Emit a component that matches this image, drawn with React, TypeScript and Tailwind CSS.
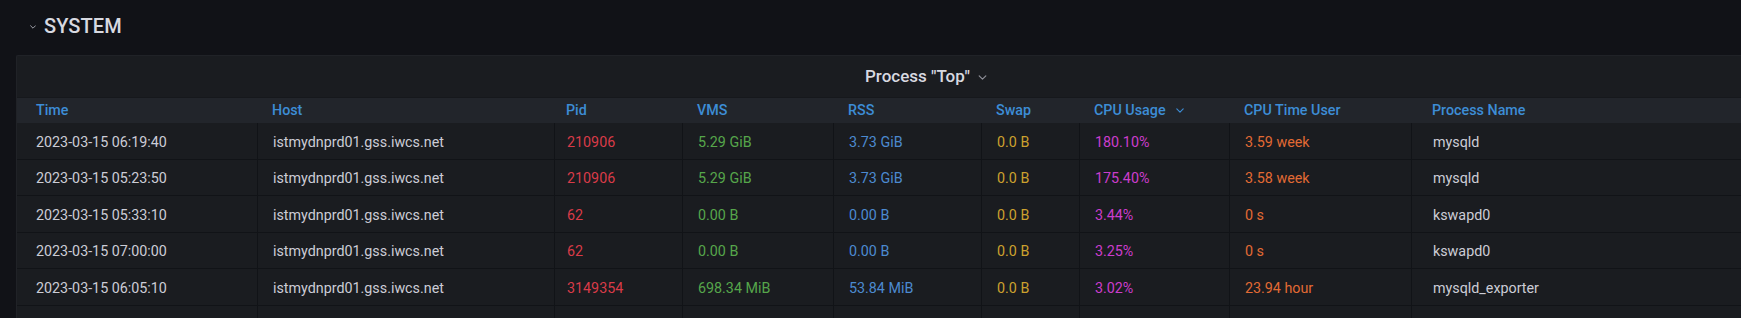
import React from 'react';

type Row = {
  time: string;
  host: string;
  pid: string;
  vms: string;
  rss: string;
  swap: string;
  cpu: string;
  cpuTime: string;
  name: string;
};

const rows: Row[] = [
  { time: '2023-03-15 06:19:40', host: 'istmydnprd01.gss.iwcs.net', pid: '210906', vms: '5.29 GiB', rss: '3.73 GiB', swap: '0.0 B', cpu: '180.10%', cpuTime: '3.59 week', name: 'mysqld' },
  { time: '2023-03-15 05:23:50', host: 'istmydnprd01.gss.iwcs.net', pid: '210906', vms: '5.29 GiB', rss: '3.73 GiB', swap: '0.0 B', cpu: '175.40%', cpuTime: '3.58 week', name: 'mysqld' },
  { time: '2023-03-15 05:33:10', host: 'istmydnprd01.gss.iwcs.net', pid: '62', vms: '0.00 B', rss: '0.00 B', swap: '0.0 B', cpu: '3.44%', cpuTime: '0 s', name: 'kswapd0' },
  { time: '2023-03-15 07:00:00', host: 'istmydnprd01.gss.iwcs.net', pid: '62', vms: '0.00 B', rss: '0.00 B', swap: '0.0 B', cpu: '3.25%', cpuTime: '0 s', name: 'kswapd0' },
  { time: '2023-03-15 06:05:10', host: 'istmydnprd01.gss.iwcs.net', pid: '3149354', vms: '698.34 MiB', rss: '53.84 MiB', swap: '0.0 B', cpu: '3.02%', cpuTime: '23.94 hour', name: 'mysqld_exporter' },
  { time: '2023-03-15 06:45:20', host: 'istmydnprd01.gss.iwcs.net', pid: '3149354', vms: '698.34 MiB', rss: '53.84 MiB', swap: '0.0 B', cpu: '2.98%', cpuTime: '23.61 hour', name: 'mysqld_exporter' },
];

const grid =
  'grid grid-cols-[240px_297px_128px_151px_148px_98px_150px_182px_1fr]';

function Chevron({ className }: { className: string }) {
  return (
    <svg viewBox="0 0 10 6" className={className} fill="none">
      <path d="M1 1l4 4 4-4" stroke="currentColor" strokeWidth="1.4" strokeLinecap="round" strokeLinejoin="round" />
    </svg>
  );
}

const headers = ['Time', 'Host', 'Pid', 'VMS', 'RSS', 'Swap', 'CPU Usage', 'CPU Time User', 'Process Name'];

const headPad = ['pl-[19px]', 'pl-[15px]', 'pl-[12px]', 'pl-[15px]', 'pl-[15px]', 'pl-[15px]', 'pl-[15px]', 'pl-[15px]', 'pl-[21px]'];

export default function App() {
  return (
    <div className="w-[1741px] h-[318px] overflow-hidden bg-[#111217] font-[Roboto,sans-serif]">
      {/* row title */}
      <div className="h-[52px] flex items-center pl-[30px] gap-[8px] text-[#d8d9e0]">
        <Chevron className="w-[6px] h-[4px] mt-[2px] text-[#b9bac2]" />
        <span className="text-[20px] font-medium tracking-[0.1px]">SYSTEM</span>
      </div>

      <div className="mt-[3px] ml-[16px] w-[1819px] bg-[#1a1c20] border-l border-t border-[#202227] rounded-[2px]">
        <div className="h-[41px] flex items-center justify-center gap-[8px]">
          <span className="text-[17px] font-medium text-[#d8d9e0]">Process "Top"</span>
          <Chevron className="w-[9px] h-[5px] mt-[2px] text-[#8e8f98]" />
        </div>

        <div className={`${grid} h-[26px] items-center bg-[#22252b] border-t border-[#16181c] text-[14.3px] font-medium text-[#3d8dd6]`}>
          {headers.map((h, i) => (
            <div key={h} className={`${headPad[i]} flex items-center gap-[10px]`}>
              <span>{h}</span>
              {h === 'CPU Usage' && <Chevron className="w-[8px] h-[5px] text-[#3d8dd6]" />}
            </div>
          ))}
        </div>

        {rows.map((r, i) => (
          <div key={i} className={`${grid} h-[36.6px] border-b border-[#111317] text-[14.3px] text-[#ccccd6]`}>
            <div className="pl-[19px] flex items-center pt-[3px]">{r.time}</div>
            <div className="pl-[15px] border-l border-[#111317] flex items-center pt-[3px]">{r.host}</div>
            <div className="pl-[12px] border-l border-[#111317] flex items-center pt-[3px] text-[#d93b48]">{r.pid}</div>
            <div className="pl-[15px] border-l border-[#111317] flex items-center pt-[3px] text-[#56a64b]">{r.vms}</div>
            <div className="pl-[15px] border-l border-[#111317] flex items-center pt-[3px] text-[#4c8ad0]">{r.rss}</div>
            <div className="pl-[15px] border-l border-[#111317] flex items-center pt-[3px] text-[#cca12e]">{r.swap}</div>
            <div className="pl-[15px] border-l border-[#111317] flex items-center pt-[3px] text-[#cc3dcc]">{r.cpu}</div>
            <div className="pl-[15px] border-l border-[#111317] flex items-center pt-[3px] text-[#e26a34]">{r.cpuTime}</div>
            <div className="pl-[21px] border-l border-[#111317] flex items-center pt-[3px]">{r.name}</div>
          </div>
        ))}
      </div>
    </div>
  );
}
